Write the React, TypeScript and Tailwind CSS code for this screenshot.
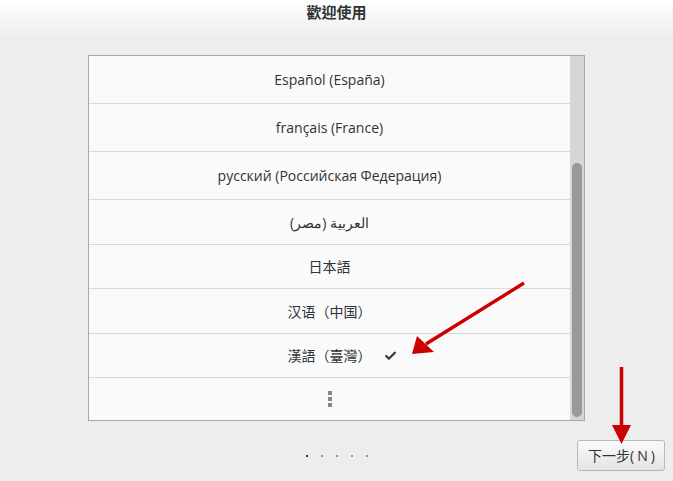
import { Check } from "lucide-react";

type Row = { label: string; h: string; checked?: boolean };

const rows: Row[] = [
  { label: "Español (España)", h: "h-[48px]" },
  { label: "français (France)", h: "h-[48px]" },
  { label: "русский (Российская Федерация)", h: "h-[48px]" },
  { label: "العربية (مصر)", h: "h-[45px]" },
  { label: "日本語", h: "h-[44px]" },
  { label: "汉语（中国）", h: "h-[45px]" },
  { label: "漢語（臺灣）", h: "h-[44px]", checked: true },
];

const font = {
  fontFamily: '"Open Sans", "Noto Sans", "Noto Sans CJK TC", sans-serif',
};

export default function App() {
  return (
    <div
      className="relative w-[673px] h-[481px] bg-[#ededed] overflow-hidden flex flex-col text-[#2e3436]"
      style={font}
    >
      {/* Header */}
      <div className="h-[40px] bg-gradient-to-b from-white to-[#ededed] flex justify-center">
        <h1 className="pt-[3px] text-[15px] leading-[18px] font-bold">歡迎使用</h1>
      </div>

      {/* Language list */}
      <div className="mt-[15px] mx-auto w-[497px] h-[366px] border border-[#a8a8a8] bg-[#fafafa] flex">
        <div className="flex-1 flex flex-col">
          {rows.map((row) => (
            <div
              key={row.label}
              className={`${row.h} shrink-0 border-b border-[#d9d9d9] flex items-center justify-center text-[14px]`}
            >
              <span className="relative">
                {row.label}
                {row.checked && (
                  <Check
                    className="absolute left-full top-1/2 -translate-y-1/2 ml-[12px] w-[13px] h-[13px] text-[#333]"
                    strokeWidth={4}
                  />
                )}
              </span>
            </div>
          ))}
          <div className="flex-1 flex flex-col items-center justify-center gap-[2px]">
            <span className="w-[4px] h-[4px] bg-[#888]" />
            <span className="w-[4px] h-[4px] bg-[#888]" />
            <span className="w-[4px] h-[4px] bg-[#888]" />
          </div>
        </div>
        {/* Scrollbar */}
        <div className="w-[14px] bg-[#d6d6d6] flex flex-col px-[2px] pt-[107px] pb-[3px]">
          <div className="flex-1 rounded-full bg-[#999999]" />
        </div>
      </div>

      {/* Footer */}
      <div className="mt-[19px] h-[31px] grid grid-cols-[1fr_auto_1fr] items-center">
        <div />
        <div className="flex gap-[13px]">
          <span className="w-[2px] h-[2px] bg-[#333]" />
          <span className="w-[2px] h-[2px] bg-[#999]" />
          <span className="w-[2px] h-[2px] bg-[#999]" />
          <span className="w-[2px] h-[2px] bg-[#999]" />
          <span className="w-[2px] h-[2px] bg-[#999]" />
        </div>
        <div className="flex justify-end pr-[8px]">
          <button className="w-[88px] h-[31px] rounded-[3px] border border-[#b8b8b8] bg-gradient-to-b from-[#fafafa] to-[#e4e4e4] text-[14px] text-[#2e3436] pl-[1px]">
            下一步<span className="tracking-[3px]">(N</span>)
          </button>
        </div>
      </div>

      {/* Annotation arrows */}
      <svg
        className="absolute inset-0 pointer-events-none"
        width="673"
        height="481"
        viewBox="0 0 673 481"
      >
        <line x1="524" y1="283" x2="426" y2="344" stroke="#cc0000" strokeWidth="3.5" />
        <polygon points="412,354 417,336 434,352" fill="#cc0000" />
        <line x1="621.5" y1="367" x2="621.5" y2="428" stroke="#cc0000" strokeWidth="3.5" />
        <polygon points="612,425 631,425 621.5,444" fill="#cc0000" />
      </svg>
    </div>
  );
}
